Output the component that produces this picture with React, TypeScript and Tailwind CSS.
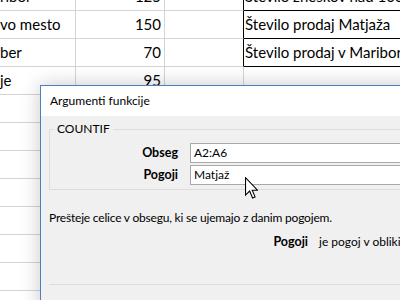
import React from 'react';

const gridRows = [
  { a: 'ribor', b: '125', d: 'Število zneskov nad 100 €', boxed: true },
  { a: 'vo mesto', b: '150', d: 'Število prodaj Matjaža', boxed: true },
  { a: 'ber', b: '70', d: 'Število prodaj v Mariboru', boxed: true },
  { a: 'je', b: '95', d: '', boxed: false },
  { a: '', b: '', d: '', boxed: false },
  { a: '', b: '', d: '', boxed: false },
  { a: '', b: '', d: '', boxed: false },
  { a: '', b: '', d: '', boxed: false },
  { a: '', b: '', d: '', boxed: false },
  { a: '', b: '', d: '', boxed: false },
  { a: '', b: '', d: '', boxed: false },
];

function Sheet() {
  return (
    <div className="flex flex-col -mt-[17px] text-[15px] text-black font-['Lato','Liberation_Sans',sans-serif]">
      {gridRows.map((r, i) => (
        <div key={i} className="flex h-[28px] shrink-0">
          <div className="w-[76px] border-r border-b border-[#d4d4d4] flex items-end pb-[3px] whitespace-nowrap overflow-hidden">
            {r.a}
          </div>
          <div className="w-[89px] border-r border-b border-[#d4d4d4] flex items-end justify-end pb-[3px] pr-[3px]">
            {r.b}
          </div>
          <div
            className={
              r.boxed
                ? 'w-[79px] border-r border-r-black border-b border-b-[#d4d4d4]'
                : 'w-[79px] border-r border-b border-[#d4d4d4]'
            }
          />
          <div
            className={
              r.boxed
                ? 'flex-1 border-b border-black flex items-end pb-[3px] pl-[1px] whitespace-nowrap overflow-hidden'
                : 'flex-1 border-b border-[#d4d4d4]'
            }
          >
            {r.d}
          </div>
        </div>
      ))}
    </div>
  );
}

function Cursor() {
  return (
    <svg
      className="absolute left-[245px] top-[177px]"
      width="13"
      height="22"
      viewBox="0 0 12 20"
    >
      <path
        d="M0.5 0.5 L0.5 16.5 L4.3 12.8 L7 19.2 L9.3 18.2 L6.7 12 L11.5 12 Z"
        fill="#fff"
        stroke="#000"
        strokeWidth="1"
        strokeLinejoin="miter"
      />
    </svg>
  );
}

function Dialog() {
  return (
    <div className="absolute left-[40px] top-[85px] w-[420px] h-[260px] border border-[#4a80c0] bg-[#f0f0f0] shadow-[0_0_18px_rgba(0,0,0,0.22)] text-[12px] text-black font-['Lato','Liberation_Sans',sans-serif]">
      <div className="h-[30px] bg-white flex items-center pl-[9px]">Argumenti funkcije</div>
      <div className="flex flex-col pt-[5px]">
        <fieldset className="ml-[8px] border border-[#dcdcdc] pt-[6px] pb-[4px]">
          <legend className="ml-[4px] px-[3px] leading-[16px]">COUNTIF</legend>
          <div className="flex flex-col gap-[2px]">
            <div className="flex items-center gap-[12px]">
              <span className="w-[128px] shrink-0 text-right font-bold text-[12.5px]">Obseg</span>
              <div className="flex-1 h-[20px] bg-white border border-[#a8a8a8] border-r-0 flex items-center pl-[3px]">
                A2:A6
              </div>
            </div>
            <div className="flex items-center gap-[12px]">
              <span className="w-[128px] shrink-0 text-right font-bold text-[12.5px]">Pogoji</span>
              <div className="flex-1 h-[20px] bg-white border border-[#a8a8a8] border-r-0 flex items-center pl-[3px]">
                Matjaž
              </div>
            </div>
          </div>
        </fieldset>
        <p className="mt-[20px] pl-[8px] leading-[16px] whitespace-nowrap tracking-[-0.2px]">
          Prešteje celice v obsegu, ki se ujemajo z danim pogojem.
        </p>
        <div className="mt-[8px] pl-[8px] flex gap-[11px] leading-[16px] whitespace-nowrap">
          <span className="w-[259px] shrink-0 text-right font-bold text-[12.5px]">Pogoji</span>
          <span>je pogoj v obliki števila, izraza ali besedila</span>
        </div>
        <div className="mt-[34px] ml-[8px] border-t border-[#dcdcdc]" />
      </div>
    </div>
  );
}

export default function App() {
  return (
    <div className="relative w-[400px] h-[300px] overflow-hidden bg-white">
      <Sheet />
      <Dialog />
      <Cursor />
    </div>
  );
}
